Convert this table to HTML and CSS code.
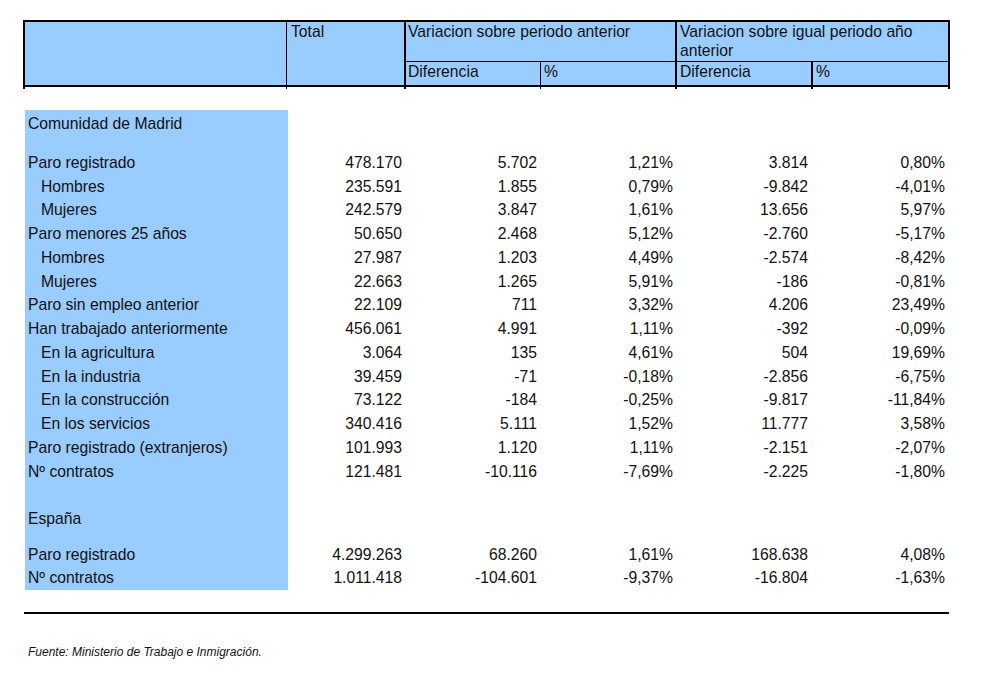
FILE: index.html
```html
<!DOCTYPE html>
<html lang="es">
<head>
<meta charset="utf-8">
<title>Paro registrado</title>
<link rel="stylesheet" href="styles.css">
</head>
<body>
<div class="page">
  <div class="head">
    <div class="hcell h-label"></div>
    <div class="hcell h-total">Total</div>
    <div class="hgroup g1">
      <div class="gtitle">Variacion sobre periodo anterior</div>
      <div class="gsub">
        <div class="sub s-dif">Diferencia</div>
        <div class="sub">%</div>
      </div>
    </div>
    <div class="hgroup g2">
      <div class="gtitle">Variacion sobre igual periodo año anterior</div>
      <div class="gsub">
        <div class="sub s-dif2">Diferencia</div>
        <div class="sub s-last">%</div>
      </div>
    </div>
  </div>

  <div class="tbody">
    <div class="row sec"><div class="lbl">Comunidad de Madrid</div></div>
    <div class="row sp1"><div class="lbl"></div></div>
    <div class="row"><div class="lbl">Paro registrado</div><div class="n">478.170</div><div class="n">5.702</div><div class="n">1,21%</div><div class="n">3.814</div><div class="n">0,80%</div></div>
    <div class="row"><div class="lbl ind">Hombres</div><div class="n">235.591</div><div class="n">1.855</div><div class="n">0,79%</div><div class="n">-9.842</div><div class="n">-4,01%</div></div>
    <div class="row"><div class="lbl ind">Mujeres</div><div class="n">242.579</div><div class="n">3.847</div><div class="n">1,61%</div><div class="n">13.656</div><div class="n">5,97%</div></div>
    <div class="row"><div class="lbl">Paro menores 25 años</div><div class="n">50.650</div><div class="n">2.468</div><div class="n">5,12%</div><div class="n">-2.760</div><div class="n">-5,17%</div></div>
    <div class="row"><div class="lbl ind">Hombres</div><div class="n">27.987</div><div class="n">1.203</div><div class="n">4,49%</div><div class="n">-2.574</div><div class="n">-8,42%</div></div>
    <div class="row"><div class="lbl ind">Mujeres</div><div class="n">22.663</div><div class="n">1.265</div><div class="n">5,91%</div><div class="n">-186</div><div class="n">-0,81%</div></div>
    <div class="row"><div class="lbl">Paro sin empleo anterior</div><div class="n">22.109</div><div class="n">711</div><div class="n">3,32%</div><div class="n">4.206</div><div class="n">23,49%</div></div>
    <div class="row"><div class="lbl">Han trabajado anteriormente</div><div class="n">456.061</div><div class="n">4.991</div><div class="n">1,11%</div><div class="n">-392</div><div class="n">-0,09%</div></div>
    <div class="row"><div class="lbl ind">En la agricultura</div><div class="n">3.064</div><div class="n">135</div><div class="n">4,61%</div><div class="n">504</div><div class="n">19,69%</div></div>
    <div class="row"><div class="lbl ind">En la industria</div><div class="n">39.459</div><div class="n">-71</div><div class="n">-0,18%</div><div class="n">-2.856</div><div class="n">-6,75%</div></div>
    <div class="row"><div class="lbl ind">En la construcción</div><div class="n">73.122</div><div class="n">-184</div><div class="n">-0,25%</div><div class="n">-9.817</div><div class="n">-11,84%</div></div>
    <div class="row"><div class="lbl ind">En los servicios</div><div class="n">340.416</div><div class="n">5.111</div><div class="n">1,52%</div><div class="n">11.777</div><div class="n">3,58%</div></div>
    <div class="row"><div class="lbl">Paro registrado (extranjeros)</div><div class="n">101.993</div><div class="n">1.120</div><div class="n">1,11%</div><div class="n">-2.151</div><div class="n">-2,07%</div></div>
    <div class="row"><div class="lbl">Nº contratos</div><div class="n">121.481</div><div class="n">-10.116</div><div class="n">-7,69%</div><div class="n">-2.225</div><div class="n">-1,80%</div></div>
    <div class="row sp2"><div class="lbl"></div></div>
    <div class="row sec"><div class="lbl">España</div></div>
    <div class="row sp3"><div class="lbl"></div></div>
    <div class="row r2"><div class="lbl">Paro registrado</div><div class="n">4.299.263</div><div class="n">68.260</div><div class="n">1,61%</div><div class="n">168.638</div><div class="n">4,08%</div></div>
    <div class="row r2"><div class="lbl">Nº contratos</div><div class="n">1.011.418</div><div class="n">-104.601</div><div class="n">-9,37%</div><div class="n">-16.804</div><div class="n">-1,63%</div></div>
  </div>

  <div class="rule"></div>
  <p class="source">Fuente: Ministerio de Trabajo e Inmigración.</p>
</div>
</body>
</html>
```

FILE: styles.css
```css
* { box-sizing: border-box; }

html, body {
  margin: 0;
  padding: 0;
  background: #ffffff;
}

body {
  font-family: "Liberation Sans", Arial, sans-serif;
  font-size: 15.7px;
  color: #111111;
}

.page {
  padding: 20px 0 0 23px;
  width: 981px;
}

/* ---------- header ---------- */
.head {
  display: grid;
  grid-template-columns: 262px 119px 271px 271px;
  width: 927px;
  height: 67px;
  border: 2px solid #000;
  background: #99ccff;
}

.hcell {
  position: relative;
  height: 63px;
  line-height: 18.5px;
  padding: 1px 0 0 3px;
}

.h-label { border-right: 1px solid #000; }
.h-total { border-right: 2px solid #000; padding-left: 4px; }

.hgroup {
  position: relative;
  display: flex;
  flex-direction: column;
  height: 63px;
}

.g1 { border-right: 2px solid #000; }

.gtitle {
  height: 40px;
  border-bottom: 1px solid #000;
  line-height: 18.5px;
  padding: 1px 0 0 2px;
}

.g2 .gtitle { padding-left: 3px; }

.gsub {
  display: flex;
  height: 23px;
}

.sub {
  position: relative;
  line-height: 18.5px;
  padding: 1px 0 0 3px;
  flex: 1;
}

.s-dif { flex: 0 0 135px; border-right: 1px solid #000; padding-left: 2px; }
.s-dif2 { flex: 0 0 136px; border-right: 2px solid #000; }

/* small ticks where the column rules run past the header's bottom border */
.h-label::before,
.h-label::after,
.h-total::after,
.g1::after,
.s-dif::after,
.s-dif2::after,
.s-last::after {
  content: "";
  position: absolute;
  bottom: -4px;
  height: 2px;
  background: #000;
}

.h-label::before { left: -2px; width: 2px; }
.h-label::after { right: -1px; width: 1px; }
.h-total::after { right: -2px; width: 2px; }
.g1::after { right: -2px; width: 2px; }
.s-dif::after { right: -1px; width: 1px; }
.s-dif2::after { right: -2px; width: 2px; }
.s-last::after { right: -2px; width: 2px; }

/* ---------- body ---------- */
.tbody {
  margin-top: 23px;
  padding-left: 2px;
}

.row {
  display: grid;
  grid-template-columns: 263px 116px 135px 136px 135px 137px;
  height: 23.75px;
  align-items: center;
}

.row > div {
  height: 100%;
  display: flex;
  align-items: center;
  white-space: nowrap;
}

.lbl {
  background: #99ccff;
  padding-left: 3px;
}

.lbl.ind { padding-left: 16px; }

.n {
  justify-content: flex-end;
  padding-right: 2px;
}

.row.sec { height: 27px; }
.row.sp1 { height: 14px; }
.row.sp2 { height: 22px; }
.row.sp3 { height: 11px; }
.row.r2 { height: 23.25px; }

/* ---------- footer ---------- */
.rule {
  margin: 22px 0 0 1px;
  width: 925px;
  height: 2px;
  background: #000;
}

.source {
  margin: 31px 0 0 5px;
  font-size: 12px;
  line-height: 14px;
  font-style: italic;
}
```
